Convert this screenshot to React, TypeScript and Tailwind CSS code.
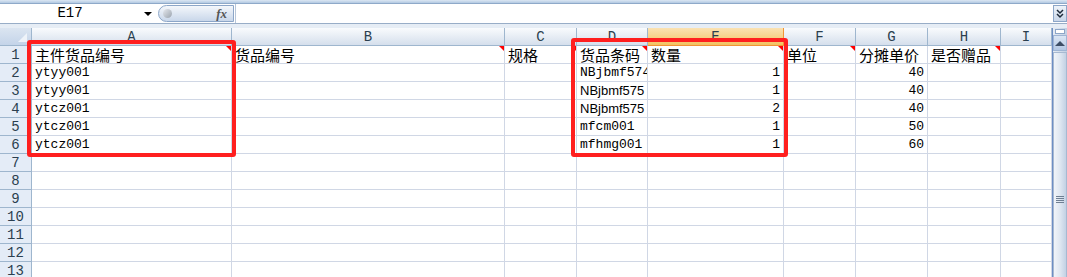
import React from "react";

const colClasses = "grid-cols-[32px_200px_273px_72px_71px_136px_72px_72px_73px_51px]";
const letters = ["A", "B", "C", "D", "E", "F", "G", "H", "I"];

type Cell = { t?: string; kind?: "cjk" | "mono" | "sans" | "num"; note?: boolean };

const rows: Cell[][] = [
  [
    { t: "主件货品编号", kind: "cjk", note: true },
    { t: "货品编号", kind: "cjk", note: true },
    { t: "规格", kind: "cjk", note: true },
    { t: "货品条码", kind: "cjk", note: true },
    { t: "数量", kind: "cjk", note: true },
    { t: "单位", kind: "cjk", note: true },
    { t: "分摊单价", kind: "cjk" },
    { t: "是否赠品", kind: "cjk", note: true },
    {},
  ],
  [{ t: "ytyy001", kind: "mono" }, {}, {}, { t: "NBjbmf574", kind: "mono" }, { t: "1", kind: "num" }, {}, { t: "40", kind: "num" }, {}, {}],
  [{ t: "ytyy001", kind: "mono" }, {}, {}, { t: "NBjbmf575", kind: "sans" }, { t: "1", kind: "num" }, {}, { t: "40", kind: "num" }, {}, {}],
  [{ t: "ytcz001", kind: "mono" }, {}, {}, { t: "NBjbmf575", kind: "sans" }, { t: "2", kind: "num" }, {}, { t: "40", kind: "num" }, {}, {}],
  [{ t: "ytcz001", kind: "mono" }, {}, {}, { t: "mfcm001", kind: "mono" }, { t: "1", kind: "num" }, {}, { t: "50", kind: "num" }, {}, {}],
  [{ t: "ytcz001", kind: "mono" }, {}, {}, { t: "mfhmg001", kind: "mono" }, { t: "1", kind: "num" }, {}, { t: "60", kind: "num" }, {}, {}],
];

const mono = "font-['Liberation_Mono','Noto_Sans_CJK_SC',monospace]";

function DataCell({ c }: { c: Cell }) {
  let text = "";
  if (c.kind === "cjk") text = "font-['Noto_Sans_CJK_SC',sans-serif] text-[15px] leading-[16px] justify-start";
  if (c.kind === "mono") text = `${mono} text-[13px] leading-[16px] justify-start pt-[1px] overflow-x-clip`;
  if (c.kind === "sans") text = "font-['Liberation_Sans',sans-serif] text-[13px] leading-[16px] text-[#1c1c6b] justify-start pt-[1px]";
  if (c.kind === "num") text = `${mono} text-[13px] leading-[16px] justify-end pt-[1px]`;
  return (
    <div
      className={`relative flex h-[18px] items-center whitespace-nowrap border-r border-b border-[#d0d7e5] bg-white px-[3px] text-black ${text}`}
    >
      {c.t}
      {c.note && (
        <span className="absolute right-0 top-0 h-[5px] w-[5px] bg-[#ff0000] [clip-path:polygon(0_0,100%_0,100%_100%)]" />
      )}
    </div>
  );
}

function FormulaBar() {
  return (
    <div className="flex flex-col">
      <div className="h-[4px] border-b border-[#8ea9c9] bg-gradient-to-b from-[#dbe7f3] to-[#b3c9e2]" />
      <div className="flex h-[20px] items-stretch bg-white border-b border-[#98adc7]">
        <div className="relative flex w-[158px] items-center justify-center">
          <span className={`${mono} text-[14px] text-black -ml-[18px]`}>E17</span>
          <span className="absolute left-[144px] top-[8px] h-0 w-0 border-x-[4px] border-t-[4px] border-x-transparent border-t-black" />
        </div>
        <div className="my-[1px] flex w-[76px] items-center justify-between rounded-l-full border border-[#8ca6c8] bg-gradient-to-b from-[#f4f7fb] to-[#c9d7ea] pl-[4px] pr-[6px]">
          <span className="h-[9px] w-[9px] rounded-full bg-gradient-to-br from-[#e6e9ee] to-[#9aa3ae]" />
          <span className="font-['Liberation_Serif',serif] text-[13px] font-bold italic text-[#555]">fx</span>
        </div>
        <div className="flex-1 border-l border-[#b7c6d9] ml-[1px]" />
        <div className="my-[1px] flex w-[14px] flex-col items-center justify-center border border-[#8ca6c8] bg-gradient-to-b from-[#eef3f9] to-[#c8d6e9]">
          <svg width="8" height="10" viewBox="0 0 8 10">
            <path d="M1 1 L4 4 L7 1 M1 5 L4 8 L7 5" stroke="#1d2a3a" strokeWidth="1.5" fill="none" />
          </svg>
        </div>
      </div>
      <div className="h-[4px] bg-[#e6edf5]" />
    </div>
  );
}

function ScrollBar() {
  return (
    <div className="flex w-[15px] flex-col border-l border-[#6d8ec4] bg-gradient-to-r from-[#e6ecf4] to-[#c0cfe2]">
      <div className="mx-[2px] mt-[1px] h-[5px] border border-[#8ca6c8] bg-white" />
      <div className="mt-[1px] flex h-[16px] items-center justify-center border border-[#9fb5d4] bg-gradient-to-b from-[#dbe6f4] to-[#b3c7e3]">
        <span className="h-0 w-0 border-x-[5px] border-b-[5px] border-x-transparent border-b-[#3d4e66]" />
      </div>
      <div className="mt-[1px] flex flex-1 flex-col items-center border border-[#a7b9d1] bg-gradient-to-r from-[#f1f4f9] via-[#dfe7f1] to-[#c3d1e4] pt-[143px]">
        <span className="h-[1px] w-[8px] bg-[#6f7f93]" />
        <span className="mt-[1px] h-[1px] w-[8px] bg-[#6f7f93]" />
        <span className="mt-[1px] h-[1px] w-[8px] bg-[#6f7f93]" />
        <span className="mt-[1px] h-[1px] w-[8px] bg-[#6f7f93]" />
      </div>
    </div>
  );
}

export default function App() {
  const emptyRows = [7, 8, 9, 10, 11, 12, 13];
  return (
    <div className="relative h-[277px] w-[1067px] overflow-hidden bg-white">
      <FormulaBar />
      <div className="flex">
        <div className={`grid ${colClasses} auto-rows-[18px]`}>
          {/* corner */}
          <div className="relative border-r border-b border-[#9eb6ce] bg-gradient-to-b from-[#dbe5f1] to-[#c4d4e9]">
            <span className="absolute bottom-[3px] right-[4px] h-[9px] w-[9px] bg-[#eef3f9] [clip-path:polygon(100%_0,100%_100%,0_100%)]" />
          </div>
          {letters.map((l) => (
            <div
              key={l}
              className={`flex items-center justify-center border-r border-b ${mono} text-[14px] leading-none text-[#2b3f4f] ${
                l === "E"
                  ? "border-[#f29436] bg-gradient-to-b from-[#fbe2b3] to-[#f2c25f]"
                  : "border-[#9eb6ce] bg-gradient-to-b from-[#f9fbfd] to-[#d5dfec]"
              }`}
            >
              {l}
            </div>
          ))}
          {rows.map((r, i) => (
            <React.Fragment key={i}>
              <div className={`flex items-center justify-center border-r border-b border-[#9eb6ce] bg-[#e4ecf7] ${mono} text-[14px] leading-none text-[#2b3f4f]`}>
                {i + 1}
              </div>
              {r.map((c, j) => (
                <DataCell key={j} c={c} />
              ))}
            </React.Fragment>
          ))}
          {emptyRows.map((n) => (
            <React.Fragment key={n}>
              <div className={`flex items-center justify-center border-r border-b border-[#9eb6ce] bg-[#e4ecf7] ${mono} text-[14px] leading-none text-[#2b3f4f]`}>
                {n}
              </div>
              {letters.map((l) => (
                <div key={l} className="border-r border-b border-[#d0d7e5] bg-white" />
              ))}
            </React.Fragment>
          ))}
        </div>
        <ScrollBar />
      </div>
      {/* highlight boxes drawn over the sheet */}
      <div className="absolute left-[27px] top-[40px] h-[117px] w-[209px] rounded-[3px] border-[4px] border-[#ff1f1f]" />
      <div className="absolute left-[571px] top-[38px] h-[119px] w-[217px] rounded-[3px] border-[4px] border-[#ff1f1f]" />
    </div>
  );
}
